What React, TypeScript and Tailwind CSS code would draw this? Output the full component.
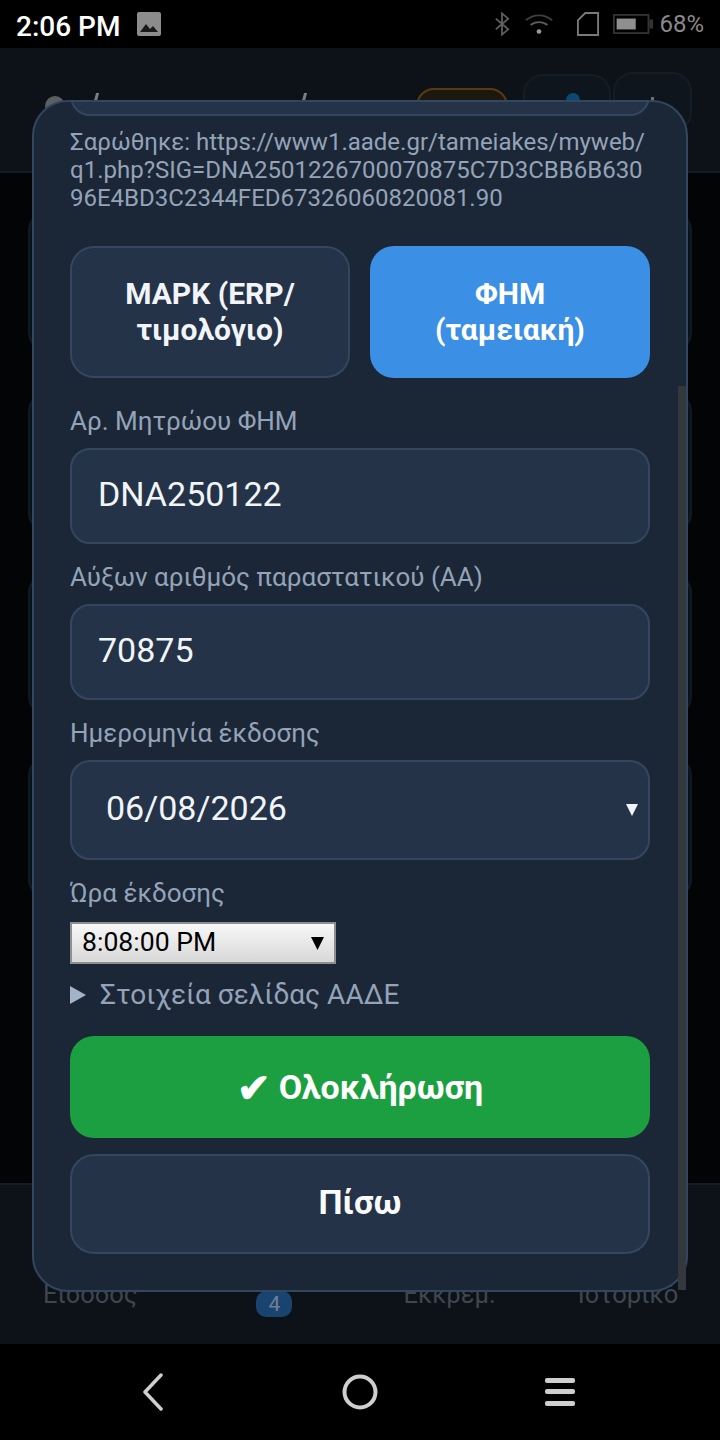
import React from 'react';

const ROBOTO = { fontFamily: 'Roboto, sans-serif' };

const Field: React.FC<{ label: string; value: string }> = ({ label, value }) => (
  <div className="flex flex-col">
    <label className="text-[26px] leading-[30px] h-[32px] text-[#94a3b8]">{label}</label>
    <div className="mt-[10px] h-[96px] rounded-[20px] border-2 border-[#34475f] bg-[#243347] px-[26px] pb-[4px] flex items-center text-[34px] text-[#f1f5f9]">
      {value}
    </div>
  </div>
);

const BackdropCard: React.FC<{ className: string }> = ({ className }) => (
  <div className={`mx-[28px] rounded-[20px] border-2 border-[#101a25] bg-[#0a1219] ${className}`} />
);

export default function App() {
  return (
    <div className="relative w-[720px] h-[1440px] overflow-hidden bg-black flex flex-col" style={ROBOTO}>
      {/* Status bar */}
      <div className="h-[48px] shrink-0 bg-black flex items-center pl-[16px] pr-[16px]">
        <span className="text-[28px] font-medium text-white leading-none mt-[5px]">2:06 PM</span>
        <svg className="ml-[17px]" width="24" height="24" viewBox="0 0 24 24">
          <rect width="24" height="24" y="0" rx="2" fill="#8c8c8c" />
          <path d="M3 20l6-8 4 5 3-3 5 6z" fill="#1a1a1a" />
        </svg>
        <div className="ml-auto flex items-center">
          <svg width="16" height="26" viewBox="0 0 18 26" fill="none" stroke="#5f5f5f" strokeWidth="2">
            <path d="M2 7l14 12-7 6V1l7 6L2 19" />
          </svg>
          <svg className="ml-[14px]" width="30" height="24" viewBox="0 0 32 24" fill="none" stroke="#3f3f3f" strokeWidth="2">
            <path d="M2 8c8-7 20-7 28 0" />
            <path d="M7 13c5-4 13-4 18 0" stroke="#5c5c5c" />
            <circle cx="16" cy="20" r="2.5" fill="#9a9a9a" stroke="none" />
          </svg>
          <svg className="ml-[23px]" width="22" height="24" viewBox="0 0 24 26" fill="none" stroke="#7a7a7a" strokeWidth="2">
            <path d="M9 1h14v24H1V9z" />
          </svg>
          <svg className="ml-[12px]" width="44" height="20" viewBox="0 0 44 22">
            <rect x="1" y="1" width="38" height="20" fill="none" stroke="#333" strokeWidth="2" />
            <rect x="4" y="5" width="21" height="12" fill="#8f8f8f" />
            <rect x="40" y="6" width="4" height="10" fill="#333" />
          </svg>
          <span className="ml-[4px] text-[24px] leading-none text-[#8a8a8a]">68%</span>
        </div>
      </div>

      {/* Dimmed app page behind the dialog */}
      <div className="flex-1 bg-[#0c1218] flex flex-col min-h-0">
        <div className="h-[125px] shrink-0 border-b-2 border-[#141c25] relative">
          <div className="absolute left-[45px] top-[48px] w-[20px] h-[20px] rounded-full bg-[#5a5f63]" />
          <div className="absolute left-[95px] top-[45px] w-[3px] h-[8px] skew-x-[-15deg] bg-[#7a7f85]" />
          <div className="absolute left-[303px] top-[45px] w-[3px] h-[8px] skew-x-[-15deg] bg-[#7a7f85]" />
          <div className="absolute left-[416px] top-[40px] w-[92px] h-[50px] rounded-[18px] border-2 border-[#5a3a10] bg-[#1c1810]" />
          <div className="absolute left-[523px] top-[26px] w-[88px] h-[60px] rounded-[20px] border-2 border-[#141c26] bg-[#0f151c]" />
          <div className="absolute left-[566px] top-[45px] w-[14px] h-[14px] rounded-full bg-[#0a4a70]" />
          <div className="absolute left-[613px] top-[24px] w-[79px] h-[60px] rounded-[20px] border-2 border-[#141c26] bg-[#0f151c]" />
          <div className="absolute left-[651px] top-[49px] w-[3px] h-[6px] bg-[#6d7074]" />
        </div>
        <div className="flex-1 bg-[#020406] pt-[38px] flex flex-col gap-[40px] min-h-0">
          <BackdropCard className="h-[141px] shrink-0" />
          <BackdropCard className="h-[141px] shrink-0" />
          <BackdropCard className="h-[143px] shrink-0" />
          <BackdropCard className="h-[143px] shrink-0" />
        </div>
        <div className="h-[161px] shrink-0 border-t-2 border-[#141c25] bg-[#0c1218] relative">
          <div className="absolute top-[94px] left-0 w-full flex items-start text-[25.5px] leading-[30px] text-[#3e4650]">
            <span className="ml-[43px]">Είσοδος</span>
            <span className="ml-[119px] mt-[12px] w-[36px] h-[26px] rounded-[10px] bg-[#1a4470] text-center text-[21px] leading-[26px] text-[#6f8094]">4</span>
            <span className="ml-[111px]">Εκκρεμ.</span>
            <span className="ml-[82px]">Ιστορικό</span>
          </div>
        </div>
      </div>

      {/* Navigation bar */}
      <div className="h-[96px] shrink-0 bg-black grid grid-cols-3 w-[438px] mx-auto items-center justify-items-center">
        <svg className="justify-self-start" width="24" height="38" viewBox="0 0 24 38" fill="none" stroke="#cfcfcf" strokeWidth="3.5" strokeLinecap="round" strokeLinejoin="round">
          <path d="M20 2L4 19l16 17" />
        </svg>
        <svg width="36" height="36" viewBox="0 0 36 36" fill="none" stroke="#cfcfcf" strokeWidth="4">
          <circle cx="18" cy="18" r="15.5" />
        </svg>
        <svg className="justify-self-end mr-[4px]" width="30" height="28" viewBox="0 0 30 28" fill="#cfcfcf">
          <rect y="0" width="30" height="5" rx="2" />
          <rect y="11" width="30" height="5" rx="2" />
          <rect y="23" width="30" height="5" rx="2" />
        </svg>
      </div>

      {/* Dialog */}
      <div className="absolute left-[32px] top-[100px] w-[656px] h-[1192px] rounded-[36px] border-2 border-[#33465f] bg-[#1b2736] overflow-hidden">
        <div className="relative px-[36px] flex flex-col">
          <div className="-mt-[22px] h-[36px] rounded-b-[20px] border-2 border-t-0 border-[#34475f] bg-[#243347]" />
          <p className="mt-[12px] text-[24px] leading-[28px] text-[#94a3b8] break-all h-[84px]">
            Σαρώθηκε: https://www1.aade.gr/tameiakes/myweb/
            <br />
            q1.php?SIG=DNA2501226700070875C7D3CBB6B630
            <br />
            96E4BD3C2344FED67326060820081.90
          </p>
          <div className="mt-[34px] grid grid-cols-2 gap-[20px]">
            <div className="h-[132px] rounded-[24px] border-2 border-[#34475f] bg-[#243347] flex items-center justify-center text-center text-[30px] leading-[36px] font-bold text-[#f1f5f9]">
              ΜΑΡΚ (ERP/<br />τιμολόγιο)
            </div>
            <div className="h-[132px] rounded-[24px] bg-[#3b90e5] flex items-center justify-center text-center text-[30px] leading-[36px] font-bold text-white">
              ΦΗΜ<br />(ταμειακή)
            </div>
          </div>
          <div className="mt-[28px] flex flex-col gap-[18px]">
            <Field label="Αρ. Μητρώου ΦΗΜ" value="DNA250122" />
            <Field label="Αύξων αριθμός παραστατικού (ΑΑ)" value="70875" />
            <div className="flex flex-col">
              <label className="text-[26px] leading-[30px] h-[32px] text-[#94a3b8]">Ημερομηνία έκδοσης</label>
              <div className="mt-[10px] h-[100px] rounded-[20px] border-2 border-[#34475f] bg-[#243347] pl-[34px] pr-[10px] flex items-center justify-between text-[34px] text-[#f1f5f9]">
                <span className="mb-[4px]">06/08/2026</span>
                <svg width="12" height="14" viewBox="0 0 12 14" fill="#f1f5f9"><path d="M0 1h12L6 13z" /></svg>
              </div>
            </div>
          </div>
          <label className="mt-[18px] text-[26px] leading-[30px] h-[32px] text-[#94a3b8]">Ώρα έκδοσης</label>
          <div className="mt-[12px] w-[266px] h-[42px] border-2 border-[#8f8f8f] bg-gradient-to-b from-[#f8f8f8] to-[#d8d8d8] pl-[10px] pr-[10px] flex items-center justify-between text-[26.6px] text-black">
            <span className="mb-[2px]">8:08:00 PM</span>
            <svg width="13" height="15" viewBox="0 0 13 15" fill="#000"><path d="M0 1h13L6.5 14z" /></svg>
          </div>
          <div className="mt-[15px] h-[32px] flex items-center text-[28px] text-[#94a3b8]">
            <svg width="16" height="20" viewBox="0 0 16 20" fill="#a3b3c8"><path d="M0 1l16 9-16 9z" /></svg>
            <span className="ml-[14px]">Στοιχεία σελίδας ΑΑΔΕ</span>
          </div>
          <div className="mt-[25px] h-[102px] rounded-[24px] bg-[#1c9f40] flex items-center justify-center text-[34px] font-bold text-white">
            <span className="text-[40px] leading-none mr-[8px] mt-[4px]">✔</span>Ολοκλήρωση
          </div>
          <div className="mt-[16px] h-[100px] rounded-[24px] border-2 border-[#34475f] bg-[#243347] pb-[4px] flex items-center justify-center text-[34px] font-bold text-[#f8fafc]">
            Πίσω
          </div>
        </div>
      </div>
      {/* Scrollbar is drawn past the dialog's rounded corner */}
      <div className="absolute left-[678px] top-[386px] w-[8px] h-[904px] bg-[#33383f]" />
    </div>
  );
}
